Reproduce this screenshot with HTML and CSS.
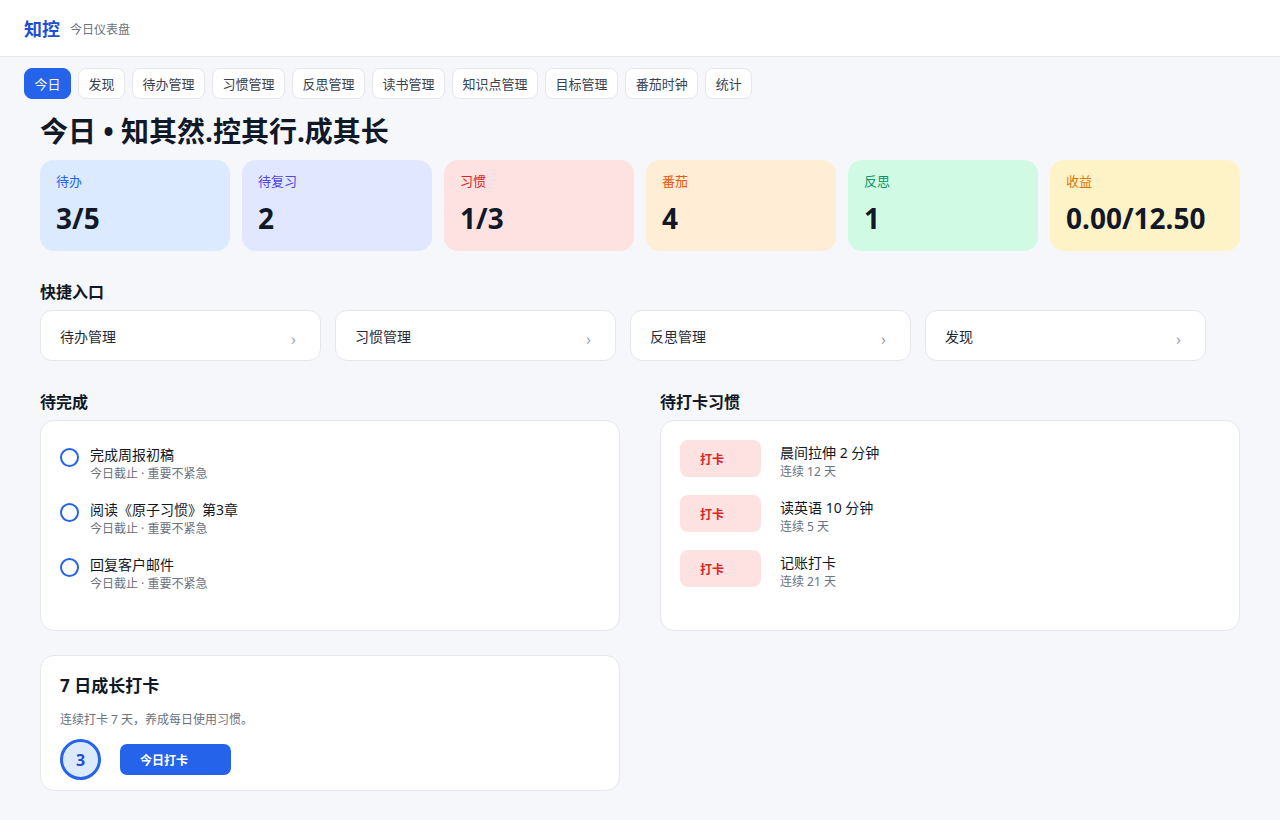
FILE: index.html
```html
<!DOCTYPE html>
<html lang="zh-CN">
<head>
<meta charset="utf-8">
<title>知控 · 今日仪表盘</title>
<link rel="stylesheet" href="styles.css">
</head>
<body>
<header class="topbar">
  <span class="brand">知控</span>
  <span class="brand-sub">今日仪表盘</span>
</header>

<nav class="tabs">
  <a class="tab active">今日</a>
  <a class="tab">发现</a>
  <a class="tab">待办管理</a>
  <a class="tab">习惯管理</a>
  <a class="tab">反思管理</a>
  <a class="tab">读书管理</a>
  <a class="tab">知识点管理</a>
  <a class="tab">目标管理</a>
  <a class="tab">番茄时钟</a>
  <a class="tab">统计</a>
</nav>

<main class="page">
  <h1 class="page-title">今日 • 知其然.控其行.成其长</h1>

  <section class="stats">
    <div class="stat stat-blue"><div class="stat-label">待办</div><div class="stat-value">3/5</div></div>
    <div class="stat stat-indigo"><div class="stat-label">待复习</div><div class="stat-value">2</div></div>
    <div class="stat stat-red"><div class="stat-label">习惯</div><div class="stat-value">1/3</div></div>
    <div class="stat stat-orange"><div class="stat-label">番茄</div><div class="stat-value">4</div></div>
    <div class="stat stat-green"><div class="stat-label">反思</div><div class="stat-value">1</div></div>
    <div class="stat stat-amber"><div class="stat-label">收益</div><div class="stat-value">0.00/12.50</div></div>
  </section>

  <h2 class="section-title">快捷入口</h2>
  <section class="quick">
    <a class="quick-card"><span>待办管理</span><span class="chev">›</span></a>
    <a class="quick-card"><span>习惯管理</span><span class="chev">›</span></a>
    <a class="quick-card"><span>反思管理</span><span class="chev">›</span></a>
    <a class="quick-card"><span>发现</span><span class="chev">›</span></a>
  </section>

  <section class="split">
    <div class="col">
      <h2 class="section-title">待完成</h2>
      <div class="panel">
        <ul class="todo-list">
          <li class="todo">
            <span class="todo-check"></span>
            <div class="todo-text">
              <div class="item-title">完成周报初稿</div>
              <div class="item-sub">今日截止 · 重要不紧急</div>
            </div>
          </li>
          <li class="todo">
            <span class="todo-check"></span>
            <div class="todo-text">
              <div class="item-title">阅读《原子习惯》第3章</div>
              <div class="item-sub">今日截止 · 重要不紧急</div>
            </div>
          </li>
          <li class="todo">
            <span class="todo-check"></span>
            <div class="todo-text">
              <div class="item-title">回复客户邮件</div>
              <div class="item-sub">今日截止 · 重要不紧急</div>
            </div>
          </li>
        </ul>
      </div>
    </div>

    <div class="col">
      <h2 class="section-title">待打卡习惯</h2>
      <div class="panel">
        <ul class="habit-list">
          <li class="habit">
            <button class="check-btn">打卡</button>
            <div class="habit-text">
              <div class="item-title">晨间拉伸 2 分钟</div>
              <div class="item-sub">连续 12 天</div>
            </div>
          </li>
          <li class="habit">
            <button class="check-btn">打卡</button>
            <div class="habit-text">
              <div class="item-title">读英语 10 分钟</div>
              <div class="item-sub">连续 5 天</div>
            </div>
          </li>
          <li class="habit">
            <button class="check-btn">打卡</button>
            <div class="habit-text">
              <div class="item-title">记账打卡</div>
              <div class="item-sub">连续 21 天</div>
            </div>
          </li>
        </ul>
      </div>
    </div>
  </section>

  <section class="split streak-row">
    <div class="streak-card">
      <h3 class="streak-title">7 日成长打卡</h3>
      <p class="streak-desc">连续打卡 7 天，养成每日使用习惯。</p>
      <div class="streak-actions">
        <span class="streak-count">3</span>
        <button class="primary-btn">今日打卡</button>
      </div>
    </div>
  </section>
</main>
</body>
</html>
```

FILE: styles.css
```css
* { box-sizing: border-box; }

body {
  margin: 0;
  background: #f5f7fb;
  color: #111827;
  font-family: "Noto Sans", "Noto Sans CJK SC", sans-serif;
  font-size: 14px;
}

/* top bar */
.topbar {
  height: 57px;
  background: #fff;
  border-bottom: 1px solid #e5e7eb;
  padding: 0 24px;
  display: flex;
  align-items: center;
  gap: 10px;
}
.brand {
  font-size: 18px;
  font-weight: 700;
  color: #1d4ed8;
}
.brand-sub {
  font-size: 12px;
  color: #6b7280;
  padding-top: 1px;
}

/* tab strip */
.tabs {
  display: flex;
  gap: 7px;
  padding: 11px 24px 0;
}
.tab {
  height: 31px;
  padding: 0 9.5px;
  display: flex;
  align-items: center;
  background: #fff;
  border: 1px solid #e5e7eb;
  border-radius: 8px;
  font-size: 13px;
  color: #374151;
}
.tab.active {
  background: #2563eb;
  border-color: #2563eb;
  color: #fff;
}

/* main column */
.page {
  padding: 0 40px;
}
.page-title {
  margin: 15px 0 12px;
  font-size: 28px;
  line-height: 34px;
  font-weight: 700;
  color: #111827;
}

/* stat tiles */
.stats {
  display: grid;
  grid-template-columns: repeat(6, 1fr);
  gap: 12px;
}
.stat {
  height: 91px;
  border-radius: 14px;
  padding: 12px 16px 0;
}
.stat-label {
  font-size: 13px;
  line-height: 18px;
}
.stat-value {
  margin-top: 10px;
  font-size: 28px;
  line-height: 36px;
  font-weight: 700;
  color: #111827;
}
.stat-blue   { background: #dbeafe; } .stat-blue .stat-label   { color: #2563eb; }
.stat-indigo { background: #e0e7ff; } .stat-indigo .stat-label { color: #4f46e5; }
.stat-red    { background: #fee2e2; } .stat-red .stat-label    { color: #dc2626; }
.stat-orange { background: #ffedd5; } .stat-orange .stat-label { color: #ea580c; }
.stat-green  { background: #d1fae5; } .stat-green .stat-label  { color: #059669; }
.stat-amber  { background: #fef3c7; } .stat-amber .stat-label  { color: #d97706; }

/* section headings */
.section-title {
  margin: 29px 0 6px;
  font-size: 16px;
  line-height: 24px;
  font-weight: 700;
  color: #111827;
}

/* quick links */
.quick {
  display: grid;
  grid-template-columns: repeat(4, 281px);
  gap: 14px;
}
.quick-card {
  height: 51px;
  background: #fff;
  border: 1px solid #e5e7eb;
  border-radius: 12px;
  padding: 0 24px 0 19px;
  display: flex;
  align-items: center;
  justify-content: space-between;
  font-size: 14px;
  color: #1f2937;
}
.chev {
  color: #9ca3af;
  font-size: 16px;
  margin-top: 7px;
}

/* two-column panels */
.split {
  display: grid;
  grid-template-columns: 1fr 1fr;
  gap: 40px;
}
.panel {
  height: 211px;
  background: #fff;
  border: 1px solid #e5e7eb;
  border-radius: 14px;
  padding: 19px 19px;
}
ul {
  list-style: none;
  margin: 0;
  padding: 0;
}
.item-title {
  font-size: 14px;
  line-height: 20px;
  color: #111827;
}
.item-sub {
  font-size: 12px;
  line-height: 18px;
  color: #6b7280;
}

/* todos */
.todo-list {
  display: flex;
  flex-direction: column;
  gap: 17px;
  padding-top: 5px;
}
.todo {
  display: flex;
  align-items: flex-start;
  gap: 11px;
}
.todo-check {
  flex: none;
  width: 19px;
  height: 19px;
  margin-top: 3px;
  border: 2px solid #2563eb;
  border-radius: 50%;
}

/* habits */
.habit-list {
  display: flex;
  flex-direction: column;
  gap: 14px;
}
.habit {
  display: flex;
  align-items: flex-start;
  gap: 19px;
}
.check-btn {
  flex: none;
  width: 81px;
  height: 37px;
  border: 0;
  border-radius: 8px;
  background: #fee2e2;
  color: #dc2626;
  font-family: inherit;
  font-size: 12px;
  font-weight: 700;
  text-align: left;
  padding: 0 20px;
}
.habit-text {
  margin-top: 3px;
}

/* streak card */
.streak-row {
  margin-top: 24px;
}
.streak-card {
  background: #fff;
  border: 1px solid #e5e7eb;
  border-radius: 14px;
  padding: 18px 19px 10px;
}
.streak-title {
  margin: 0;
  font-size: 17px;
  line-height: 24px;
  font-weight: 700;
}
.streak-desc {
  margin: 13px 0 10px;
  font-size: 12px;
  line-height: 18px;
  color: #6b7280;
}
.streak-actions {
  display: flex;
  align-items: center;
  gap: 19px;
}
.streak-count {
  width: 41px;
  height: 41px;
  border-radius: 50%;
  border: 3px solid #2563eb;
  background: #dbeafe;
  color: #1d4ed8;
  font-weight: 700;
  font-size: 16px;
  display: flex;
  align-items: center;
  justify-content: center;
}
.primary-btn {
  width: 111px;
  height: 31px;
  border: 0;
  border-radius: 7px;
  background: #2563eb;
  color: #fff;
  font-family: inherit;
  font-size: 12px;
  font-weight: 700;
  text-align: left;
  padding: 0 20px;
}
```
